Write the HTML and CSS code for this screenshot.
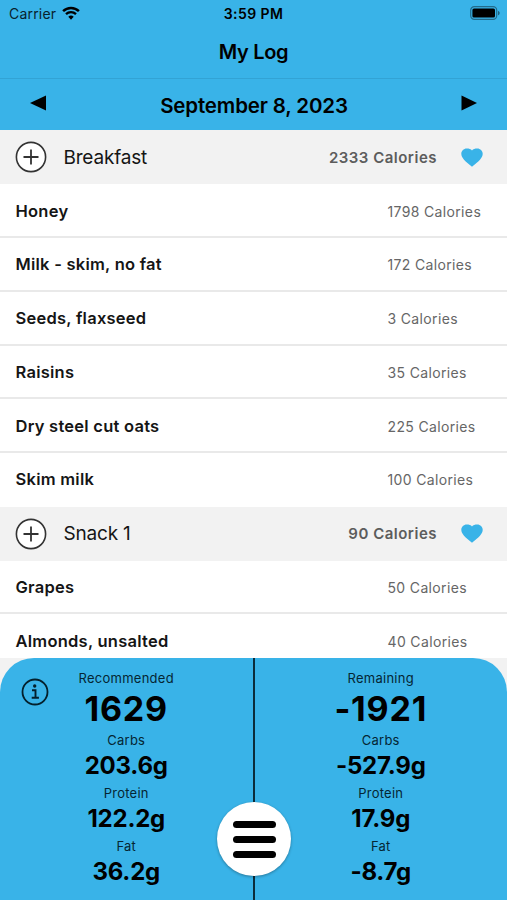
FILE: index.html
```html
<!DOCTYPE html>
<html lang="en">
<head>
  <meta charset="UTF-8" />
  <title>My Log</title>
  <meta name="viewport" content="width=device-width, initial-scale=1" />
  <link rel="stylesheet" href="styles.css">
</head>
<body>
  <div class="app">
    <!-- Status bar -->
    <div class="status-bar">
      <div class="carrier">
        <span>Carrier</span>
        <svg class="wifi" viewBox="0 0 18 14" width="18" height="14">
          <path d="M1.1 5.1a11.4 11.4 0 0 1 15.8 0" fill="none" stroke="#000" stroke-width="2.5"/>
          <path d="M4 8.2a7.2 7.2 0 0 1 10 0" fill="none" stroke="#000" stroke-width="2.3"/>
          <path d="M9 13.7l-2.7-2.9a3.8 3.8 0 0 1 5.4 0z"/>
        </svg>
      </div>
      <div class="time">3:59 PM</div>
      <svg class="battery" viewBox="0 0 30 14" width="30" height="14">
        <rect x=".7" y=".7" width="26" height="12.6" rx="3.6" fill="none" stroke="#000" stroke-opacity=".4" stroke-width="1.2"/>
        <rect x="2.4" y="2.4" width="22.6" height="9.2" rx="1.6"/>
        <path d="M28 4.7v4.6c1-.4 1.7-1.3 1.7-2.3S29 5.1 28 4.7z" opacity=".45"/>
      </svg>
    </div>

    <header class="title-bar"><h1>My Log</h1></header>

    <nav class="date-bar">
      <button class="arrow"><svg viewBox="0 0 16 16" width="16" height="16"><path d="M0 8L16 .4v15.200z"/></svg></button>
      <h2>September 8, 2023</h2>
      <button class="arrow"><svg viewBox="0 0 16 16" width="16" height="16"><path d="M16 8L.5.4v15.200z"/></svg></button>
    </nav>

    <!-- Meals -->
    <main class="log">
      <div class="meal">
        <svg class="add" viewBox="0 0 32 32" width="32" height="32"><circle cx="16" cy="16" r="14.6"/><path d="M16 8.500v15M8.500 16h15"/></svg>
        <span class="meal-name">Breakfast</span>
        <span class="meal-total">2333 Calories</span>
        <svg class="heart" viewBox="0 0 22 19" width="22" height="19"><path d="M11 18.700C8.500 16.300.3 11 .3 5.900.3 2.800 2.700.4 5.700.4 8 .4 10 .9 11 2.500 12 .9 14 .4 16.300.4c3 0 5.400 2.400 5.400 5.500 0 5.100-8.200 10.400-10.700 12.800z"/></svg>
      </div>
      <div class="food"><span class="food-name">Honey</span><span class="calories">1798 Calories</span></div>
      <div class="food"><span class="food-name">Milk - skim, no fat</span><span class="calories">172 Calories</span></div>
      <div class="food"><span class="food-name">Seeds, flaxseed</span><span class="calories">3 Calories</span></div>
      <div class="food"><span class="food-name">Raisins</span><span class="calories">35 Calories</span></div>
      <div class="food"><span class="food-name">Dry steel cut oats</span><span class="calories">225 Calories</span></div>
      <div class="food last"><span class="food-name">Skim milk</span><span class="calories">100 Calories</span></div>

      <div class="meal">
        <svg class="add" viewBox="0 0 32 32" width="32" height="32"><circle cx="16" cy="16" r="14.6"/><path d="M16 8.500v15M8.500 16h15"/></svg>
        <span class="meal-name">Snack 1</span>
        <span class="meal-total">90 Calories</span>
        <svg class="heart" viewBox="0 0 22 19" width="22" height="19"><path d="M11 18.700C8.500 16.300.3 11 .3 5.900.3 2.800 2.700.4 5.700.4 8 .4 10 .9 11 2.500 12 .9 14 .4 16.300.4c3 0 5.400 2.400 5.400 5.500 0 5.100-8.200 10.400-10.700 12.800z"/></svg>
      </div>
      <div class="food"><span class="food-name">Grapes</span><span class="calories">50 Calories</span></div>
      <div class="food last"><span class="food-name">Almonds, unsalted</span><span class="calories">40 Calories</span></div>
    </main>

    <!-- Daily totals -->
    <footer class="summary">
      <section class="totals recommended">
        <div class="label">Recommended</div>
        <div class="kcal">1629</div>
        <div class="label">Carbs</div>
        <div class="grams">203.6g</div>
        <div class="label">Protein</div>
        <div class="grams">122.2g</div>
        <div class="label">Fat</div>
        <div class="grams">36.2g</div>
      </section>
      <section class="totals remaining">
        <div class="label">Remaining</div>
        <div class="kcal">-1921</div>
        <div class="label">Carbs</div>
        <div class="grams">-527.9g</div>
        <div class="label">Protein</div>
        <div class="grams">17.9g</div>
        <div class="label">Fat</div>
        <div class="grams">-8.7g</div>
      </section>
      <svg class="info" viewBox="0 0 28 28" width="28" height="28">
        <circle cx="14" cy="14" r="12.5" fill="none" stroke="#04202c" stroke-width="1.8"/>
        <circle cx="13.7" cy="8" r="1.7" fill="#04202c"/>
        <path d="M11 12.300h3.500v7M10.700 19.700h7.200" fill="none" stroke="#04202c" stroke-width="1.9"/>
      </svg>
      <button class="menu-btn"><i></i><i></i><i></i></button>
    </footer>
  </div>
</body>
</html>
```
FILE: styles.css
```css
* {
  box-sizing: border-box;
}
body {
  margin: 0;
  font-family: Inter, 'Liberation Sans', sans-serif;
  color: #000;
  background: #f2f2f2;
}
.app {
  height: 900px;
  display: flex;
  flex-direction: column;
  overflow: hidden;
  position: relative;
}
h1, h2 {
  margin: 0;
  font-weight: 600;
}
button {
  border: none;
  padding: 0;
  background: none;
  cursor: pointer;
}
svg {
  display: block;
}
.status-bar {
  height: 26px;
  flex: none;
  background: #39b3e8;
  display: grid;
  grid-template-columns: 1fr auto 1fr;
  align-items: center;
  padding: 0 7px 0 9px;
  font-size: 14px;
}
.carrier {
  display: flex;
  align-items: center;
  gap: 6px;
  color: #08222e;
  letter-spacing: 0.2px;
}
.time {
  font-weight: 600;
  font-size: 14px;
  letter-spacing: 0.4px;
  margin-right: 2px;
}
.battery {
  justify-self: end;
}
.title-bar {
  height: 53px;
  flex: none;
  background: #39b3e8;
  border-bottom: 1px solid #32a3d5;
  display: flex;
  align-items: center;
  justify-content: center;
}
.title-bar h1 {
  font-size: 20px;
  letter-spacing: -0.3px;
}
.date-bar {
  height: 51px;
  flex: none;
  background: #39b3e8;
  display: flex;
  align-items: center;
  justify-content: space-between;
  padding: 0 30px;
}
.date-bar h2 {
  font-size: 20.5px;
  letter-spacing: -0.15px;
  padding: 1px 0 0 1px;
}
.arrow {
  padding-bottom: 3px;
}
.log {
  height: 528px;
  flex: none;
  overflow: hidden;
  padding-top: 0.6px;
}
.meal {
  height: 53.75px;
  display: flex;
  align-items: center;
  padding: 0 24px 0 15px;
  background: #f2f2f2;
}
.add circle {
  fill: #fff;
  stroke: #333;
  stroke-width: 1.6;
}
.add path {
  stroke: #333;
  stroke-width: 1.8;
}
.meal-name {
  flex: 1;
  margin-left: 16.5px;
  font-size: 19px;
  letter-spacing: -0.2px;
  color: #151515;
}
.meal-total {
  font-size: 15px;
  font-weight: 600;
  color: #5c5c5c;
  letter-spacing: 0.5px;
  margin-right: 24px;
}
.heart {
  fill: #39b3e8;
}
.food {
  height: 53.75px;
  display: grid;
  grid-template-columns: 1fr 119.5px;
  align-items: center;
  padding-left: 15.5px;
  background: #fff;
  border-bottom: 2px solid #e9e9e9;
}
.food.last {
  border-bottom-color: #fff;
}
.food-name {
  font-size: 16.5px;
  font-weight: 600;
  letter-spacing: 0.25px;
  color: #151515;
  padding-top: 1px;
}
.calories {
  font-size: 14px;
  color: #666;
  letter-spacing: 0.35px;
  padding-top: 2px;
}
.summary {
  position: absolute;
  left: 0;
  right: 0;
  bottom: 0;
  height: 242px;
  background: #39b3e8;
  border-radius: 34px 34px 0 0;
  display: grid;
  grid-template-columns: 1fr 1fr;
}
.totals {
  padding-top: 12px;
  text-align: center;
}
.recommended {
  border-right: 1px solid #0b2d3b;
}
.remaining {
  border-left: 1px solid #0b2d3b;
}
.label {
  font-size: 13px;
  line-height: 17px;
  letter-spacing: 0.25px;
  color: #052633;
}
.kcal {
  font-size: 34px;
  line-height: 43px;
  padding-bottom: 2px;
  font-weight: 700;
  letter-spacing: 0.8px;
}
.grams {
  font-size: 24px;
  line-height: 34px;
  padding-bottom: 2px;
  font-weight: 700;
  letter-spacing: -0.2px;
}
.info {
  position: absolute;
  left: 21px;
  top: 20px;
}
.menu-btn {
  position: absolute;
  left: 217px;
  top: 144px;
  width: 74px;
  height: 74px;
  border-radius: 50%;
  background: #fff;
  box-shadow: 0 1px 3px #0005;
  display: flex;
  flex-direction: column;
  align-items: center;
  justify-content: center;
  gap: 8px;
}
.menu-btn i {
  width: 43px;
  height: 7px;
  border-radius: 4px;
  background: #000;
}
```
